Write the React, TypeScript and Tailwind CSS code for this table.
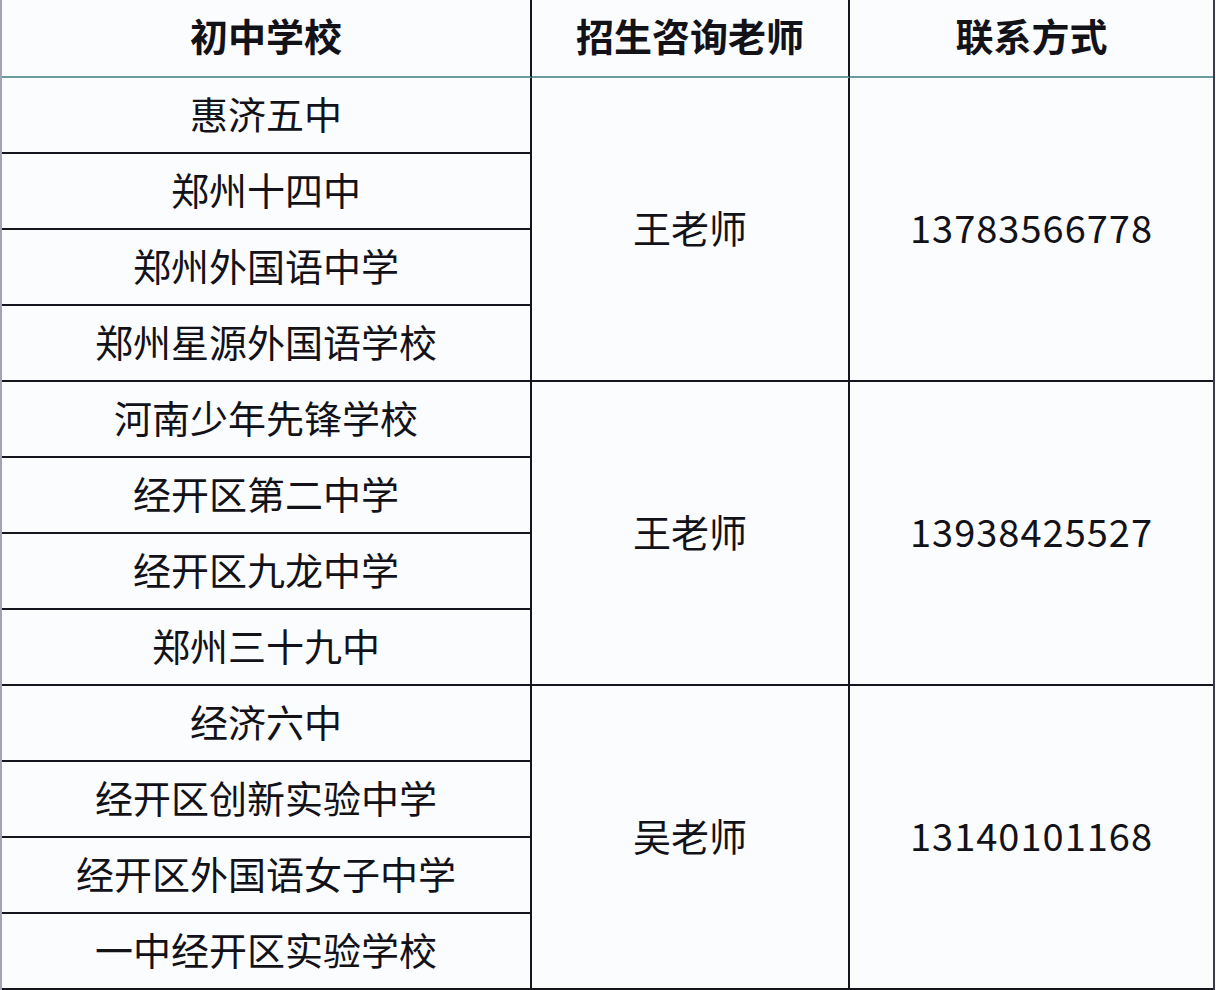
const groups = [
  {
    teacher: "王老师",
    phone: "13783566778",
    schools: ["惠济五中", "郑州十四中", "郑州外国语中学", "郑州星源外国语学校"],
  },
  {
    teacher: "王老师",
    phone: "13938425527",
    schools: ["河南少年先锋学校", "经开区第二中学", "经开区九龙中学", "郑州三十九中"],
  },
  {
    teacher: "吴老师",
    phone: "13140101168",
    schools: ["经济六中", "经开区创新实验中学", "经开区外国语女子中学", "一中经开区实验学校"],
  },
];

const font = { fontFamily: '"Noto Sans CJK SC", "Noto Sans", sans-serif' };

export default function App() {
  return (
    <div className="min-h-[990px] w-[1216px] bg-[#fbfcfe] text-[#121218]" style={font}>
      <div className="grid w-[1215px] grid-cols-[530px_318px_363px] border-l-2 border-r-2 border-l-[#a3a3b3] border-r-[#3a3a48]">
        {/* 表头 */}
        <div className="flex h-[78px] items-center justify-center border-b-2 border-r-2 border-b-[#6b9a9f] border-r-[#15151f] pb-[7px] text-[38px] font-bold">
          初中学校
        </div>
        <div className="flex h-[78px] items-center justify-center border-b-2 border-r-2 border-b-[#6b9a9f] border-r-[#15151f] pb-[7px] text-[38px] font-bold">
          招生咨询老师
        </div>
        <div className="flex h-[78px] items-center justify-center border-b-2 border-b-[#6b9a9f] pb-[7px] text-[38px] font-bold">
          联系方式
        </div>

        {groups.map((g, gi) => (
          <div key={gi} className="col-span-3 grid grid-cols-[530px_318px_363px]">
            <div className="flex flex-col">
              {g.schools.map((s) => (
                <div
                  key={s}
                  className="flex h-[76px] items-center justify-center border-b-2 border-r-2 border-[#15151f] pb-[5px] text-[38px]"
                >
                  {s}
                </div>
              ))}
            </div>
            <div className="flex items-center justify-center border-b-2 border-r-2 border-[#15151f] pb-[5px] text-[38px]">
              {g.teacher}
            </div>
            <div className="flex items-center justify-center border-b-2 border-[#15151f] pb-[5px] text-[38px] tracking-[1px]">
              {g.phone}
            </div>
          </div>
        ))}
      </div>
    </div>
  );
}
